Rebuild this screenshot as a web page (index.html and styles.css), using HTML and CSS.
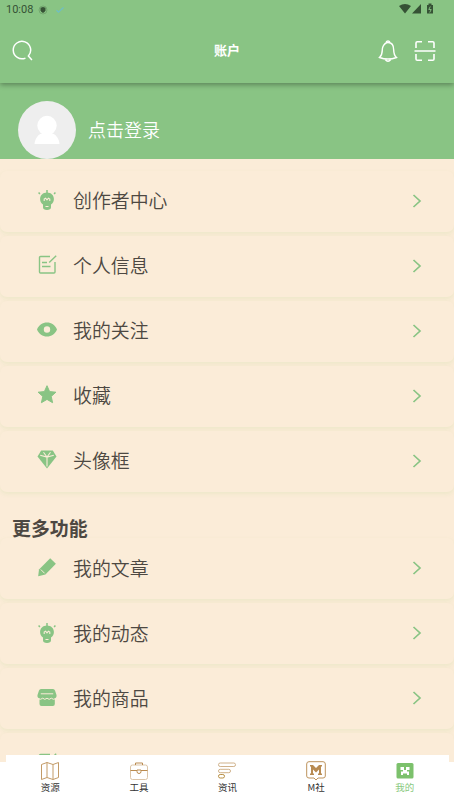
FILE: index.html
```html
<!DOCTYPE html>
<html lang="zh-CN">
<head>
<meta charset="utf-8">
<title>账户</title>
<link rel="stylesheet" href="styles.css">
</head>
<body>
<svg class="defs" width="0" height="0">
  <symbol id="bulb" viewBox="0 0 20 20"><path fill="currentColor" d="M10 2.500C5.900 2.500 3.100 5.400 3.100 9c0 2.600 1.100 4.300 2.900 5.400v2.800C6 19 7.400 20 10 20s4-1 4-2.800v-2.800c1.800-1.100 2.900-2.800 2.900-5.400 0-3.600-2.800-6.500-6.900-6.500z"/><path d="M10 0v3M1.600 2.600l1.300 1.500M18.400 2.600l-1.300 1.500" stroke="currentColor" stroke-width="1.500"/><path d="M7.200 11V9l1.400-.8L10 9.800l1.400-1.600 1.400.8v2M8.500 16.500h3" fill="none" stroke="#fbecd8" stroke-width="1.100"/></symbol>
  <symbol id="edit" viewBox="0 0 20 20"><path d="M13 1.500H3.500a1 1 0 0 0-1 1V17a1 1 0 0 0 1 1H17a1 1 0 0 0 1-1V7M5 7.500h5M5 11.500h8.500M12.200 7.500L19.200.7" fill="none" stroke="currentColor" stroke-width="1.400"/></symbol>
  <symbol id="eye" viewBox="0 0 20 20"><path fill="currentColor" fill-rule="evenodd" d="M0 9.500C2 4.800 5.500 2.500 10 2.500s8 2.300 10 7c-2 4.700-5.500 7-10 7S2 14.200 0 9.500zm13.200 0a3.200 3.200 0 1 0-6.400 0 3.200 3.200 0 0 0 6.400 0z"/></symbol>
  <symbol id="star" viewBox="0 0 20 20"><path fill="currentColor" stroke="currentColor" stroke-linejoin="round" d="M10 .7l2.600 5.900 6.300.6-4.700 4.200 1.400 6.300-5.600-3.300-5.600 3.300 1.400-6.300L1.100 7.200l6.300-.6z"/></symbol>
  <symbol id="gem" viewBox="0 0 20 20"><path fill="currentColor" d="M4.200.5h11.600l3.700 6L10 18.500.5 6.500z"/><path d="M3.200 5.300L10 7.100l6.800-1.800M6.500 2.300L10 7.100l3.500-4.800M10 7.100v9.400" fill="none" stroke="#fbecd8" stroke-width="1.100"/></symbol>
  <symbol id="pencil" viewBox="0 0 20 20"><path fill="currentColor" d="M13.200.2L18.900 5.700 8.400 16.600 1.200 18.200 2 11.400z"/><path d="M3.800 11.500l3.800 3.800" stroke="#fbecd8" stroke-width="1"/></symbol>
  <symbol id="shop" viewBox="0 0 20 20"><path fill="currentColor" d="M4 1h12q1.500 0 2 1.500L19.500 7c.4 2-.6 3-1.700 3.200v5.800q0 2-2 2H4.500q-2 0-2-2v-5.800C1 10 .1 9 .5 7L2 2.500Q2.500 1 4 1z"/><path d="M3.800 5.800h12.400M1.500 10.800q2.200 1.200 4.200-.6 2.100 2.300 4.300 0 2.200 2.300 4.300 0 2 1.800 4.200.6" fill="none" stroke="#fbecd8"/></symbol>
  <symbol id="arrow" viewBox="0 0 10 14"><path d="M1.500 1L8 7l-6.500 6" fill="none" stroke="currentColor" stroke-width="1.700"/></symbol>
</svg>

<header class="topbar">
  <div class="status">
    <span class="clock">10:08</span>
    <svg class="shield" viewBox="0 0 10 10"><circle cx="5" cy="5" r="4" fill="none" stroke="#6d9f69" stroke-width=".8"/><path d="M2.500 2.800L5 2l2.500.8v2.500Q7.300 7 5 8 2.700 7 2.500 5.300z" fill="#365235"/></svg>
    <svg class="check" viewBox="0 0 10 8"><path d="M1.500 4.300l2 1.900L8.500 1.500" fill="none" stroke="#6fbec4" stroke-width="1.300"/></svg>
    <svg class="signals" viewBox="0 0 36 12"><g fill="#365235"><path d="M0 3Q6 -1 12 3L6 10.500zM22 1v9.500h-9z"/><path d="M28 2h1.500V.5h3V2H34v8.500h-6z"/></g><path d="M31.300 3.500L29.800 6.500h2.400l-1.500 3" fill="none" stroke="#89c484" stroke-width=".9"/></svg>
  </div>
  <div class="titlebar">
    <svg class="search" viewBox="0 0 20 20"><path d="M12.800 17.200A8.300 8.300 0 1 1 15.600 15.200L19 19" fill="none" stroke="#fff" stroke-width="1.400"/></svg>
    <h1>账户</h1>
    <svg class="bell" viewBox="0 0 20 24"><path d="M8.200 3.200a1.900 1.900 0 0 1 3.600 0M5 7.500Q7 3.500 10 3.500c4 0 5.700 3.500 5.700 7.500 0 4 .8 5.700 2.800 7.500-5.500 2-11.500 2-17 0C3.500 16.700 4.300 15 4.300 11q0-2 .7-3.500M7.200 20.500q2.800 3.500 5.600 0" fill="none" stroke="#fff" stroke-width="1.400"/></svg>
    <svg class="scan" viewBox="0 0 22 22"><path d="M2 8V3q0-1.300 1.300-1.300H8M14 1.700h4.700Q20 1.700 20 3v5M2 14v5q0 1.300 1.300 1.300H8M14 20.300h4.700Q20 20.300 20 19v-5M.5 11h21" fill="none" stroke="#fff" stroke-width="1.600"/></svg>
  </div>
</header>

<section class="profile">
  <svg class="avatar" viewBox="0 0 58 58"><circle cx="29" cy="29" r="29" fill="#eee"/><circle cx="29" cy="24.500" r="9.700" fill="#fff"/><path d="M16.500 43c.5-6 4-10 8.500-11h8c4.500 1 8 5 8.500 11z" fill="#fff"/></svg>
  <span>点击登录</span>
</section>

<main class="content">
  <ul class="menu primary">
    <li><svg class="icon"><use href="#bulb"/></svg><span>创作者中心</span><svg class="arrow"><use href="#arrow"/></svg></li>
    <li><svg class="icon"><use href="#edit"/></svg><span>个人信息</span><svg class="arrow"><use href="#arrow"/></svg></li>
    <li><svg class="icon"><use href="#eye"/></svg><span>我的关注</span><svg class="arrow"><use href="#arrow"/></svg></li>
    <li><svg class="icon"><use href="#star"/></svg><span>收藏</span><svg class="arrow"><use href="#arrow"/></svg></li>
    <li><svg class="icon"><use href="#gem"/></svg><span>头像框</span><svg class="arrow"><use href="#arrow"/></svg></li>
  </ul>
  <h2>更多功能</h2>
  <ul class="menu">
    <li><svg class="icon"><use href="#pencil"/></svg><span>我的文章</span><svg class="arrow"><use href="#arrow"/></svg></li>
    <li><svg class="icon"><use href="#bulb"/></svg><span>我的动态</span><svg class="arrow"><use href="#arrow"/></svg></li>
    <li><svg class="icon"><use href="#shop"/></svg><span>我的商品</span><svg class="arrow"><use href="#arrow"/></svg></li>
    <li><svg class="icon"><use href="#edit"/></svg></li>
  </ul>
</main>

<nav class="tabs">
  <a><svg viewBox="0 0 20 20"><path d="M1.500 3.500L7 1.500l6 2 5.500-2v15l-5.500 2-6-2-5.500 2zM7 1.500v15M13 3.500v15" fill="none" stroke="#c39b67"/></svg>资源</a>
  <a><svg viewBox="0 0 20 20"><rect x="1.500" y="4" width="17" height="14.500" rx="2" fill="none" stroke="#dcc5a8"/><path d="M6.500 4V2h7v2M1.500 9.500h6.500M12 9.500h6.500M8 9h4v1.500a2 2 0 0 1-4 0z" fill="none" stroke="#ba8b50"/></svg>工具</a>
  <a><svg viewBox="0 0 20 20"><g fill="none" stroke="#d0b28b"><rect x="1.500" y="2" width="17" height="3.500" rx="1.700"/><rect x="1.500" y="8.300" width="12" height="3.400" rx="1.700"/><rect x="1.500" y="13.500" width="6" height="3.500" rx="1.700" stroke="#b98f42"/></g></svg>资讯</a>
  <a><svg viewBox="0 0 20 20"><path d="M3 .7h14Q19.300.7 19.300 3v12q0 2-2.300 2h-5L10 19l-2-2H3Q.7 17 .7 15V3Q.7.7 3 .7z" fill="none" stroke="#bd935d"/><path d="M4 4h3l3 3 3-3h3v1.500h-1v7h1V14h-4v-1.500h1v-4L10 11.500 7 8.500v4h1V14H4v-1.500h1v-7H4z" fill="#b88b52"/></svg>M社</a>
  <a class="active"><svg viewBox="0 0 20 20"><rect x="1.500" y="2" width="17" height="15.500" rx="1.500" fill="#7cc16c"/><path d="M5.500 6H9v3h2V6h3.500v3H12v1.500h2V14h-2v-1.500H8V14H6v-3.500h2V9H5.500z" fill="#fff"/></svg>我的</a>
</nav>
</body>
</html>
```

FILE: styles.css
```css
* { box-sizing: border-box; }
body {
  margin: 0;
  width: 454px;
  height: 807px;
  display: flex;
  flex-direction: column;
  overflow: hidden;
  background: #fff;
  color: #4d4842;
  font-family: "Noto Sans CJK SC", sans-serif;
}
h1, h2, ul { margin: 0; padding: 0; font-size: inherit; }
svg { display: block; flex: none; }
.defs { display: none; }

.topbar {
  flex: none;
  height: 83px;
  background: #89c484;
  box-shadow: 0 2px 5px rgba(0, 0, 0, .32);
  z-index: 1;
}
.status {
  height: 18px;
  padding: 1px 19px 0 6px;
  display: flex;
  align-items: center;
}
.clock { font: 11px/18px Roboto, sans-serif; color: #365235; width: 32px; }
.shield { width: 10px; height: 10px; }
.check { width: 10px; height: 8px; margin-left: 7px; }
.signals { width: 36px; height: 12px; margin: -1px 0 0 auto; }
.titlebar {
  height: 65px;
  padding: 0 18px 0 12px;
  display: grid;
  grid-template-columns: 60px 1fr 20px 22px;
  column-gap: 16px;
  align-items: center;
}
.search { width: 21px; height: 21px; }
.titlebar h1 {
  padding: 0 0 2px 126px;
  font-size: 13px;
  line-height: 20px;
  color: #fff;
}
.bell { width: 20px; height: 24px; }
.scan { width: 22px; height: 22px; }

.profile {
  flex: none;
  height: 76px;
  padding: 18px 18px 0;
  display: flex;
  align-items: center;
  gap: 12px;
  background: #89c484;
  color: #fff;
  font-size: 18px;
}
.profile span { padding-bottom: 3px; font-weight: 350; }
.avatar { width: 58px; height: 58px; }

.content {
  flex: none;
  height: 603px;
  padding-top: 12px;
  overflow: hidden;
  background: #fbecd8;
}
.menu {
  display: flex;
  flex-direction: column;
  gap: 4px;
  list-style: none;
}
.menu li {
  height: 61px;
  padding: 0 32px 2px 37px;
  display: flex;
  align-items: center;
  border-radius: 7px;
  background: #fbecd8;
  box-shadow: 0 2px 4px rgba(170, 215, 130, .17);
  font-size: 18.9px;
  font-weight: 350;
}
.menu span { padding-bottom: 1px; }
.primary span { padding-bottom: 3px; }
.icon { width: 20px; height: 20px; margin-right: 16px; color: #89c484; }
.primary .icon { margin-top: -1px; }
.arrow { width: 10px; height: 14px; margin-left: auto; color: #89c484; }
.content h2 {
  position: relative;
  z-index: 1;
  height: 46px;
  padding: 13px 0 0 12px;
  font-size: 18.9px;
  line-height: 46px;
}

.tabs {
  height: 52px;
  margin: -7px 5px 0 6px;
  display: grid;
  grid-template-columns: repeat(5, 1fr);
  background: #fff;
  z-index: 1;
}
.tabs a {
  padding-top: 6px;
  display: flex;
  flex-direction: column;
  align-items: center;
  font-size: 9.5px;
  line-height: 13px;
  color: #333;
}
.tabs svg { width: 20px; height: 20px; }
.tabs .active { color: #89c97e; }
```
